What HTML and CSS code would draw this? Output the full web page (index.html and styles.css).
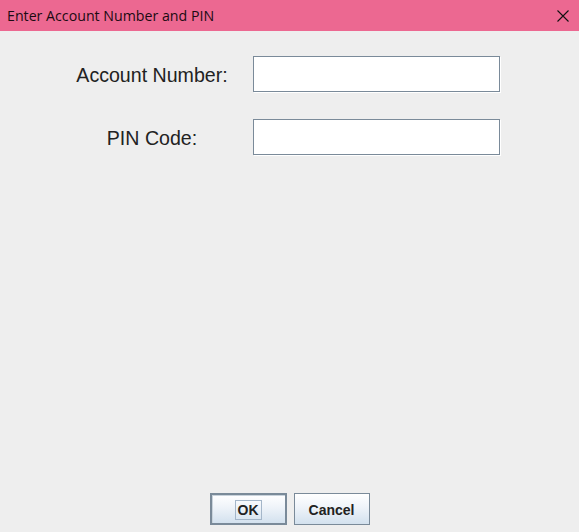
FILE: index.html
```html
<!DOCTYPE html>
<html>
<head>
<meta charset="utf-8">
<link rel="stylesheet" href="styles.css">
</head>
<body>
<div class="window">
  <div class="titlebar">
    <span class="title">Enter Account Number and PIN</span>
    <svg class="close" width="12" height="12" viewBox="0 0 12 12"><path d="M0.5 0.5 L11.5 11.5 M11.5 0.5 L0.5 11.5" stroke="#111" stroke-width="1.1" fill="none"/></svg>
  </div>
  <div class="content">
    <div class="form">
      <label class="label">Account Number:</label>
      <div class="field"></div>
      <label class="label">PIN Code:</label>
      <div class="field"></div>
    </div>
    <div class="buttons">
      <button class="btn btn-default"><span class="focus">OK</span></button>
      <button class="btn">Cancel</button>
    </div>
  </div>
</div>
</body>
</html>
```
FILE: styles.css
```css
html, body {
  margin: 0;
  padding: 0;
  height: 100%;
  background: #eeeeee;
}
.window {
  display: flex;
  flex-direction: column;
  height: 532px;
  width: 579px;
}
.titlebar {
  height: 31px;
  background: #ec6891;
  display: flex;
  align-items: center;
  justify-content: space-between;
  padding: 0 10px 0 7px;
  flex: none;
}
.title {
  font-family: "Open Sans", "Noto Sans", sans-serif;
  font-size: 14.2px;
  color: #1b0b12;
}
.close {
  display: block;
}
.content {
  flex: 1;
  display: flex;
  flex-direction: column;
}
.form {
  display: grid;
  grid-template-columns: 200px 247px;
  column-gap: 1px;
  row-gap: 27px;
  padding: 25px 0 0 52px;
  align-items: center;
}
.label {
  font-family: "Liberation Sans", Arial, sans-serif;
  font-size: 19.6px;
  color: #222;
  text-align: center;
  padding-top: 3px;
}
.field {
  height: 34px;
  background: #fff;
  border: 1px solid #7a8a99;
  box-shadow: 1px 1px 0 #ffffff;
}
.buttons {
  margin-top: auto;
  display: flex;
  justify-content: center;
  gap: 7px;
  padding-bottom: 7px;
}
.btn {
  width: 76px;
  height: 32px;
  border: 1px solid #7a8a99;
  background: linear-gradient(#ffffff 0%, #eef3f9 45%, #d3e1ee 100%);
  font-family: "Liberation Sans", Arial, sans-serif;
  font-weight: bold;
  font-size: 14px;
  color: #222;
  padding: 2px 0 0 0;
  margin: 0;
  display: flex;
  align-items: center;
  justify-content: center;
}
.btn-default {
  width: 77px;
  border: 2px solid #7a8a99;
  box-shadow: inset 1px 1px 0 #c9d3dc;
}
.focus {
  border: 1px solid #a4b6c9;
  padding: 1px 2px;
  line-height: 16px;
}
```
